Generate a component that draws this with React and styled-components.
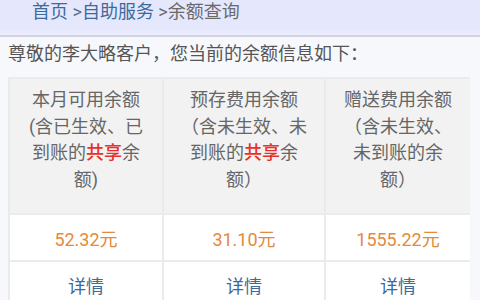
import React from 'react'
import styled, { createGlobalStyle } from 'styled-components'

const GlobalStyle = createGlobalStyle`
  html, body {
    margin: 0;
    padding: 0;
    background: #f6f8fc;
    font-family: Roboto, "Noto Sans CJK SC", sans-serif;
  }
`

const balances = [
  {
    title: '本月可用余额',
    lines: [['(含已生效、已'], ['到账的', { red: '共享' }, '余'], ['额)']],
    amount: '52.32元',
  },
  {
    title: '预存费用余额',
    lines: [['（含未生效、未'], ['到账的', { red: '共享' }, '余'], ['额）']],
    amount: '31.10元',
  },
  {
    title: '赠送费用余额',
    lines: [['（含未生效、'], ['未到账的余'], ['额）']],
    amount: '1555.22元',
  },
]

const App = () => {
  return (
    <Page>
      <GlobalStyle />
      <Crumbs>
        <CrumbLink>首页</CrumbLink>
        <Arrow> &gt;</Arrow>
        <CrumbLink>自助服务</CrumbLink>
        <Current> &gt;余额查询</Current>
      </Crumbs>
      <Greeting>尊敬的李大略客户，您当前的余额信息如下：</Greeting>
      <Table>
        {balances.map((b, i) => (
          <HeadCell key={'h' + i}>
            <Line>{b.title}</Line>
            {b.lines.map((parts, j) => (
              <Line key={j}>
                {parts.map((p, k) =>
                  typeof p === 'string' ? p : <Shared key={k}>{p.red}</Shared>
                )}
              </Line>
            ))}
          </HeadCell>
        ))}
        {balances.map((b, i) => (
          <Cell key={'a' + i}>
            <Amount>{b.amount}</Amount>
          </Cell>
        ))}
        {balances.map((b, i) => (
          <Cell key={'d' + i}>
            <Detail>详情</Detail>
          </Cell>
        ))}
      </Table>
    </Page>
  )
}

export default App

const Page = styled.div`
  width: 480px;
  height: 300px;
  overflow: hidden;
`

const Crumbs = styled.div`
  height: 37px;
  padding: 2px 0 0 32px;
  box-sizing: border-box;
  background: linear-gradient(#e5e7fd 0%, #e5e7fd 80%, #eceefc 100%);
  border-bottom: 2px solid #d2d3e2;
  font-size: 18px;
  line-height: 20px;
`

const CrumbLink = styled.span`
  color: #3b6b9b;
`

const Arrow = styled.span`
  color: #56708c;
`

const Current = styled.span`
  color: #6a6a6a;
`

const Greeting = styled.div`
  padding: 5px 8px 0;
  height: 40px;
  box-sizing: border-box;
  font-size: 18px;
  line-height: 24px;
  color: #555;
  white-space: nowrap;
`

const Table = styled.div`
  margin-left: 8px;
  width: 462px;
  display: grid;
  grid-template-columns: 152px 160px 144px;
  gap: 2px;
  padding: 2px;
  box-sizing: border-box;
  background: #ebebeb;
`

const HeadCell = styled.div`
  background: #f2f2f2;
  height: 134px;
  padding-top: 8px;
  box-sizing: border-box;
  display: flex;
  flex-direction: column;
  align-items: center;
  font-size: 18px;
  line-height: 26.7px;
  color: #666;
`

const Line = styled.div`
  white-space: nowrap;
`

const Shared = styled.span`
  color: #e8302c;
  font-weight: 500;
`

const Cell = styled.div`
  background: #fff;
  height: 45px;
  display: flex;
  align-items: center;
  justify-content: center;
  font-size: 18px;
`

const Amount = styled.span`
  color: #e38a3c;
`

const Detail = styled.span`
  color: #3b6b9b;
`
